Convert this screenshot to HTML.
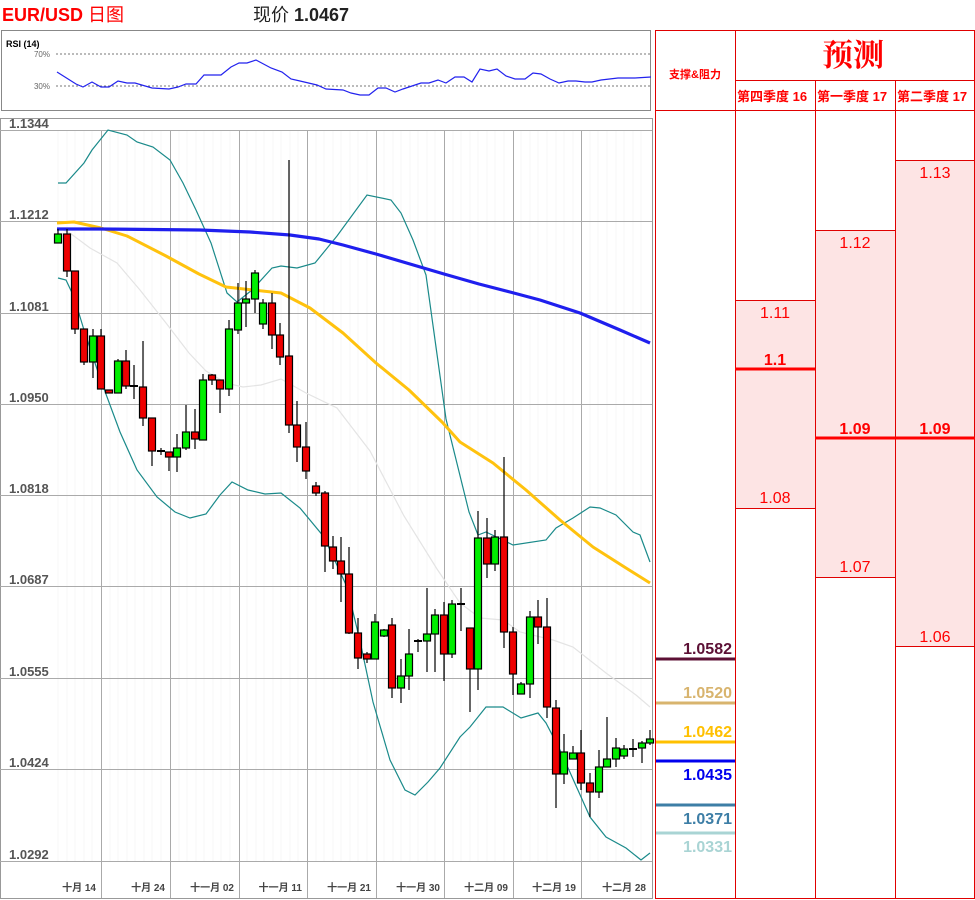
<!DOCTYPE html>
<html><head><meta charset="utf-8"><style>
html,body{margin:0;padding:0;background:#fff;width:975px;height:900px;overflow:hidden}
svg{display:block}
.pl{font-family:"Liberation Sans Narrow","Liberation Sans",sans-serif;font-size:13px;fill:#555;font-weight:bold}
.ax{font-family:"Liberation Sans Narrow","Liberation Sans","Noto Sans CJK SC",sans-serif;font-size:10px;fill:#444;font-weight:bold}
.t{font-family:"Liberation Sans","Noto Sans CJK SC",sans-serif}
</style></head><body>
<svg width="975" height="900" viewBox="0 0 975 900" xmlns="http://www.w3.org/2000/svg">
<text x="2" y="21" class="t" font-size="18" font-weight="bold" fill="#f00">EUR/USD <tspan font-weight="normal">日图</tspan></text>
<text x="253" y="21" class="t" font-size="18" fill="#222">现价 <tspan font-weight="bold">1.0467</tspan></text>

<rect x="1.5" y="30.5" width="649" height="80" fill="#fff" stroke="#888"/>
<text x="6" y="47" class="t" font-size="9" font-weight="bold" fill="#000">RSI (14)</text>
<line x1="56" y1="54" x2="650" y2="54" stroke="#777" stroke-dasharray="2,2"/>
<line x1="56" y1="86" x2="650" y2="86" stroke="#777" stroke-dasharray="2,2"/>
<text x="50" y="57" class="t" font-size="8" fill="#666" text-anchor="end">70%</text>
<text x="50" y="89" class="t" font-size="8" fill="#666" text-anchor="end">30%</text>
<polyline fill="none" stroke="#2222ee" stroke-width="1.2" points="57,72 76,84 83,87 92,82 101,87 109,87 118,81 127,83 135,83 152,88 169,89 178,87 186,84 196,84 204,75 221,75 231,67 239,63 247,63 256,60 271,68 282,72 291,79 300,81 317,85 326,89 343,90 351,93 360,95 369,95 378,88 386,88 395,92 403,89 412,86 421,83 429,83 438,80 446,83 455,77 464,77 472,82 480,69 489,71 497,69 506,76 515,79 525,79 533,73 541,74 550,79 559,83 568,81 576,81 585,82 592,82 601,80 618,78 635,78 651,77"/>

<rect x="0.5" y="118.5" width="652" height="780" fill="#fff" stroke="#999"/>
<g stroke="#f7f7f7" stroke-width="1">
<path d="M58 130V861M67 130V861M75 130V861M84 130V861M92 130V861M110 130V861M118 130V861M127 130V861M135 130V861M144 130V861M152 130V861M161 130V861M179 130V861M187 130V861M196 130V861M204 130V861M213 130V861M221 130V861M230 130V861M247 130V861M256 130V861M264 130V861M273 130V861M281 130V861M290 130V861M298 130V861M316 130V861M324 130V861M333 130V861M341 130V861M350 130V861M358 130V861M367 130V861M384 130V861M393 130V861M401 130V861M410 130V861M418 130V861M427 130V861M435 130V861M453 130V861M461 130V861M470 130V861M478 130V861M487 130V861M495 130V861M504 130V861M521 130V861M530 130V861M538 130V861M547 130V861M556 130V861M564 130V861M573 130V861M590 130V861M598 130V861M607 130V861M616 130V861M624 130V861M633 130V861M641 130V861"/>
</g>
<g stroke="#aaa" stroke-width="1">
<path d="M0 130.5H652M0 221.5H652M0 313.5H652M0 404.5H652M0 495.5H652M0 586.5H652M0 678.5H652M0 769.5H652M0 861.5H652"/>
<path d="M101.5 130V898M170.5 130V898M239.5 130V898M307.5 130V898M376.5 130V898M444.5 130V898M513.5 130V898M581.5 130V898"/>
</g>
<g class="pl">
<text x="9" y="128">1.1344</text><text x="9" y="219">1.1212</text><text x="9" y="311">1.1081</text><text x="9" y="402">1.0950</text><text x="9" y="493">1.0818</text><text x="9" y="584">1.0687</text><text x="9" y="676">1.0555</text><text x="9" y="767">1.0424</text><text x="9" y="859">1.0292</text>
</g>
<g class="ax" text-anchor="end">
<text x="96" y="891">十月 14</text><text x="165" y="891">十月 24</text><text x="234" y="891">十一月 02</text><text x="302" y="891">十一月 11</text><text x="371" y="891">十一月 21</text><text x="440" y="891">十一月 30</text><text x="508" y="891">十二月 09</text><text x="576" y="891">十二月 19</text><text x="646" y="891">十二月 28</text>
</g>

<polyline fill="none" stroke="#e4e4e4" stroke-width="1.2" points="58,228 70,233 90,248 117,263 140,290 166,323 189,353 206,371 226,383 243,387 261,385 281,379 306,393 337,408 370,451 404,516 437,569 460,603 480,618 503,620 520,632 553,640 573,647 606,673 636,695 650,707"/>
<polyline fill="none" stroke="#1a8a8a" stroke-width="1.2" points="58,183 66,183 84,163 92,150 108,130 127,135 137,142 153,147 170,160 183,183 196,210 211,243 227,293 237,302 252,290 272,268 281,266 297,268 315,263 337,236 367,195 391,200 401,213 413,240 426,275 446,419 469,512 478,535 486,532 513,545 546,540 556,528 573,518 590,507 600,508 616,515 633,532 640,535 650,562"/>
<polyline fill="none" stroke="#1a8a8a" stroke-width="1.2" points="58,278 66,280 74,297 84,330 100,378 120,432 137,470 157,497 175,512 190,518 206,514 220,495 232,482 248,490 265,494 281,493 300,508 324,537 347,587 360,641 373,702 390,760 405,790 415,795 428,782 440,768 460,737 470,727 486,707 503,707 521,718 538,713 546,723 560,750 590,817 606,837 626,848 641,860 650,853"/>
<polyline fill="none" stroke="#ffc20e" stroke-width="3" stroke-linejoin="round" points="57,223 74,222 101,228 127,236 166,256 199,274 226,287 253,290 281,293 310,308 343,333 376,363 409,390 442,422 460,442 493,463 526,490 560,520 593,547 626,568 650,583"/>
<polyline fill="none" stroke="#1f1fee" stroke-width="3.2" stroke-linejoin="round" points="57,229 100,229 200,230 250,232 290,235 319,239 343,245 376,254 410,264 444,274 479,284 510,292 540,300 580,313 620,330 650,343"/>

<g stroke="#000" stroke-width="1.2" id="c"></g>

<g fill="#fde4e4">
<rect x="735" y="300" width="80" height="208"/>
<rect x="815" y="230" width="80" height="347"/>
<rect x="895" y="160" width="80" height="487"/>
</g>
<g stroke="#e00000" stroke-width="1" fill="none">
<rect x="655.5" y="30.5" width="319" height="868"/>
<path d="M735.5 30V899M815.5 80V899M895.5 80V899M735 80.5H975M655 110.5H975"/>
<path d="M735 300.5H815M735 508.5H815M815 230.5H895M815 577.5H895M895 160.5H975M895 646.5H975"/>
</g>
<g stroke="#f00" stroke-width="3">
<path d="M735 369H815M815 438H895M895 438H975"/>
</g>
<text x="853" y="66" font-size="31" font-weight="bold" fill="#f00" text-anchor="middle" font-family="Noto Serif CJK SC,serif">预测</text>
<text x="695" y="78" class="t" font-size="11" font-weight="bold" fill="#f00" text-anchor="middle">支撑&amp;阻力</text>
<g class="t" font-size="13" font-weight="bold" fill="#f00">
<text x="737" y="101">第四季度 16</text><text x="817" y="101">第一季度 17</text><text x="897" y="101">第二季度 17</text>
</g>
<g class="t" font-size="16" fill="#f00" text-anchor="middle">
<text x="775" y="318">1.11</text><text x="775" y="503">1.08</text>
<text x="855" y="248">1.12</text><text x="855" y="572">1.07</text>
<text x="935" y="178">1.13</text><text x="935" y="642">1.06</text>
<g font-weight="bold"><text x="775" y="365">1.1</text><text x="855" y="434">1.09</text><text x="935" y="434">1.09</text></g>
</g>
<g stroke-width="3">
<line x1="656" y1="659" x2="735" y2="659" stroke="#5c1035"/>
<line x1="656" y1="703" x2="735" y2="703" stroke="#d8b46e"/>
<line x1="656" y1="742" x2="735" y2="742" stroke="#ffc000"/>
<line x1="656" y1="761" x2="735" y2="761" stroke="#0000ee"/>
<line x1="656" y1="805" x2="735" y2="805" stroke="#3d7ea6"/>
<line x1="656" y1="833" x2="735" y2="833" stroke="#a9d4d4"/>
</g>
<g class="t" font-size="16" font-weight="bold" text-anchor="end">
<text x="732" y="654" fill="#5c1035">1.0582</text>
<text x="732" y="698" fill="#d8b46e">1.0520</text>
<text x="732" y="737" fill="#ffc000">1.0462</text>
<text x="732" y="780" fill="#0000ee">1.0435</text>
<text x="732" y="824" fill="#3d7ea6">1.0371</text>
<text x="732" y="852" fill="#a9d4d4">1.0331</text>
</g>
</svg>
<script>
var d=[[58,234,243,229,243,1],[67,234,271,229,277,0],[75,271,329,271,334,0],[84,329,362,329,365,0],[93,336,362,329,378,1],[101,336,389,329,389,0],[109,390,393,390,393,0],[118,361,393,359,393,1],[126,361,386,350,389,0],[134,386,386,365,399,2],[143,387,418,341,426,0],[152,418,451,418,466,0],[161,451,451,448,455,2],[169,452,457,452,471,0],[177,448,457,434,472,1],[186,432,448,405,450,1],[195,432,439,409,449,0],[203,380,440,374,440,1],[212,375,380,374,385,0],[220,380,389,380,413,0],[229,329,389,320,396,1],[238,303,330,283,334,1],[246,299,303,281,327,1],[255,273,299,270,313,1],[263,303,324,299,329,1],[272,303,335,293,349,0],[280,335,357,323,365,0],[289,356,425,160,433,0],[297,425,447,401,462,0],[306,447,471,422,479,0],[316,486,493,482,496,0],[325,493,546,491,572,0],[333,547,561,536,569,0],[341,561,574,537,602,0],[349,574,633,547,634,0],[358,633,658,618,669,0],[367,654,659,652,663,0],[375,622,659,614,659,1],[384,630,636,629,637,1],[392,625,688,618,698,0],[401,676,688,659,703,1],[409,654,676,629,690,1],[418,641,641,639,652,2],[427,634,641,588,672,1],[435,615,634,609,672,1],[444,615,654,602,681,0],[452,604,654,600,658,1],[461,604,604,588,631,2],[470,628,669,628,712,0],[478,538,669,511,690,1],[487,538,564,518,578,0],[495,537,564,530,571,1],[504,537,632,457,648,0],[513,632,674,627,695,0],[521,684,694,682,694,1],[530,617,684,611,698,1],[538,617,627,600,644,0],[547,627,707,598,718,0],[556,708,774,700,808,0],[564,752,774,734,784,1],[573,753,759,746,759,1],[581,753,783,730,790,0],[590,783,792,773,817,0],[599,767,792,750,798,1],[607,759,767,717,767,1],[616,748,759,738,767,1],[624,749,756,745,759,1],[633,749,749,739,757,2],[642,743,748,741,763,1],[650,739,743,730,745,1]];
var g=document.getElementById('c'),s='';
d.forEach(function(c){s+='<line x1="'+c[0]+'" y1="'+c[3]+'" x2="'+c[0]+'" y2="'+c[4]+'"/>';
if(c[5]==2){s+='<line x1="'+(c[0]-4)+'" y1="'+c[1]+'" x2="'+(c[0]+4)+'" y2="'+c[1]+'" stroke-width="2"/>';}
else{s+='<rect x="'+(c[0]-3.5)+'" y="'+c[1]+'" width="7" height="'+Math.max(2,c[2]-c[1])+'" fill="'+(c[5]?'#00ee00':'#ee0000')+'"/>';}});
g.innerHTML=s;
</script>
</body></html>
